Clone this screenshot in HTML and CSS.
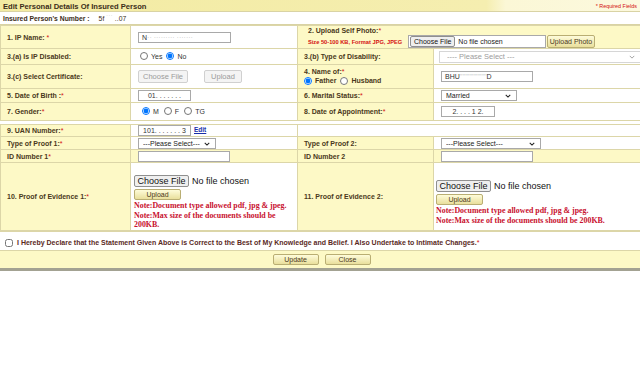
FILE: index.html
```
<!DOCTYPE html>
<html lang="en">
<head>
<meta charset="utf-8">
<title>Edit Personal Details Of Insured Person</title>
<link rel="stylesheet" href="styles.css">
</head>
<body>
<div class="page">
  <div class="titlebar">
    <span class="title">Edit Personal Details Of Insured Person</span>
    <span class="reqnote">* Required Fields</span>
  </div>
  <div class="ipnum">Insured Person's Number :<span class="ipval">5f<span class="mask">&nbsp;˙˙˙&nbsp;</span>..07</span></div>
  <table class="form">
    <colgroup><col class="c1"><col class="c2"><col class="c3"><col class="c4"></colgroup>
    <tr class="r1">
      <td class="lab">1. IP Name: <span class="star">*</span></td>
      <td class="val"><span class="txt w93"><span class="dark">N</span><span class="mask">·· ········· ·······</span></span></td>
      <td class="lab photo" colspan="2">
        <div class="photolab">2. Upload Self Photo:<span class="star">*</span></div>
        <div class="photorow">
          <span class="size">Size 50-100 KB, Format JPG, JPEG</span>
          <span class="filebox"><button class="fbtn" type="button">Choose File</button><span class="fname">No file chosen</span></span>
          <button class="ybtn photobtn" type="button">Upload Photo</button>
        </div>
      </td>
    </tr>
    <tr class="r3a">
      <td class="lab">3.(a) Is IP Disabled:</td>
      <td class="val"><label class="rad"><input type="radio" name="dis">Yes</label><label class="rad"><input type="radio" name="dis" checked>No</label></td>
      <td class="lab">3.(b) Type of Disability:</td>
      <td class="val dis"><span class="selwrap full disabled"><select disabled><option>---- Please Select ---</option></select><svg class="chev" viewBox="0 0 8 5" width="6" height="4"><path d="M1 1l3 3 3-3" fill="none" stroke="#9a9a9a" stroke-width="1.2"/></svg></span></td>
    </tr>
    <tr class="r3c">
      <td class="lab">3.(c) Select Certificate:</td>
      <td class="val"><button class="gbtn cf" type="button" disabled>Choose File</button><button class="gbtn up" type="button" disabled>Upload</button></td>
      <td class="lab">
        <div>4. Name of:<span class="star">*</span></div>
        <div class="namerad"><label class="rad"><input type="radio" name="rel" checked>Father</label><label class="rad"><input type="radio" name="rel">Husband</label></div>
      </td>
      <td class="val"><span class="txt w92">BHU<span class="mask">''''''''''''''''''''</span>D</span></td>
    </tr>
    <tr class="r5">
      <td class="lab">5. Date of Birth :<span class="star">*</span></td>
      <td class="val"><span class="txt w53 ctr">01. . . . . . .</span></td>
      <td class="lab">6. Marital Status:<span class="star">*</span></td>
      <td class="val"><span class="selwrap w76"><select><option>Married</option></select><svg class="chev" viewBox="0 0 8 5" width="6" height="4"><path d="M1 1l3 3 3-3" fill="none" stroke="#222" stroke-width="1.4"/></svg></span></td>
    </tr>
    <tr class="r7">
      <td class="lab">7. Gender:<span class="star">*</span></td>
      <td class="val gender"><label class="rad"><input type="radio" name="g" checked>M</label><label class="rad"><input type="radio" name="g">F</label><label class="rad"><input type="radio" name="g">TG</label></td>
      <td class="lab">8. Date of Appointment:<span class="star">*</span></td>
      <td class="val"><span class="txt w54 ctr">2. . . . 1 2.</span></td>
    </tr>
    <tr class="gap"><td colspan="4"></td></tr>
    <tr class="r9">
      <td class="lab">9. UAN Number:<span class="star">*</span></td>
      <td class="val"><span class="txt w53 ctr">101. . . . . . . 3</span><a class="edit" href="#">Edit</a></td>
      <td class="blank" colspan="2"></td>
    </tr>
    <tr class="rp">
      <td class="lab">Type of Proof 1:<span class="star">*</span></td>
      <td class="val"><span class="selwrap w78"><select><option>---Please Select---</option></select><svg class="chev" viewBox="0 0 8 5" width="6" height="4"><path d="M1 1l3 3 3-3" fill="none" stroke="#222" stroke-width="1.4"/></svg></span></td>
      <td class="lab">Type of Proof 2:</td>
      <td class="val"><span class="selwrap w100"><select><option>---Please Select---</option></select><svg class="chev" viewBox="0 0 8 5" width="6" height="4"><path d="M1 1l3 3 3-3" fill="none" stroke="#222" stroke-width="1.4"/></svg></span></td>
    </tr>
    <tr class="rid">
      <td class="lab">ID Number 1<span class="star">*</span></td>
      <td class="lab val"><span class="txt w92"></span></td>
      <td class="lab">ID Number 2</td>
      <td class="lab val"><span class="txt w92"></span></td>
    </tr>
    <tr class="r10">
      <td class="lab">10. Proof of Evidence 1:<span class="star">*</span></td>
      <td class="val ev">
        <div class="filerow"><button class="fbtn big" type="button">Choose File</button><span class="fname big">No file chosen</span></div>
        <button class="ybtn upl" type="button">Upload</button>
        <div class="note">Note:Document type allowed pdf, jpg &amp; jpeg.<br>Note:Max size of the documents should be 200KB.</div>
      </td>
      <td class="lab">11. Proof of Evidence 2:</td>
      <td class="val ev">
        <div class="filerow"><button class="fbtn big" type="button">Choose File</button><span class="fname big">No file chosen</span></div>
        <button class="ybtn upl" type="button">Upload</button>
        <div class="note">Note:Document type allowed pdf, jpg &amp; jpeg.<br>Note:Max size of the documents should be 200KB.</div>
      </td>
    </tr>
  </table>
  <div class="declare"><label><input type="checkbox">I Hereby Declare that the Statement Given Above is Correct to the Best of My Knowledge and Belief. I Also Undertake to Intimate Changes.<span class="star">*</span></label></div>
  <div class="actions"><button class="ybtn act" type="button">Update</button><button class="ybtn act" type="button">Close</button></div>
</div>
</body>
</html>
```
FILE: styles.css
```
* { box-sizing: border-box; }
body { margin: 0; background: #fff; font-family: "Liberation Sans", Arial, sans-serif; color: #4a3820; }
.page { width: 640px; border-bottom: 3px solid #a3a292; }
.titlebar { height: 12px; display: flex; justify-content: space-between; align-items: center; padding: 1px 3px 0 3px; background: linear-gradient(to right, #f3eba2 0%, #f5eeb0 76%, #fbf7d6 79%, #fcf9de 100%); border-bottom: 1px solid #d9d3a4; }
.title { font-weight: bold; font-size: 7.6px; color: #3c2e1a; }
.reqnote { font-size: 5.4px; color: #d41010; }
.ipnum { height: 13px; display: flex; align-items: center; padding: 0 3px; font-size: 6.8px; font-weight: bold; color: #3c2e1a; border-bottom: 1px solid #d9d3a4; }
.ipval { margin-left: 9px; font-weight: normal; }
.mask { color: #c8c8c8; }
.dark { color: #333; }
.star { color: #d41010; font-weight: normal; }

.form { width: 640px; border-collapse: collapse; table-layout: fixed; }
.c1 { width: 130px; } .c2 { width: 167px; } .c3 { width: 136px; } .c4 { width: 207px; }
.form td { border: 1px solid #dcd6a8; padding: 0 0 0 6px; font-size: 7px; vertical-align: middle; }
.form td.lab { background: #fdf9c6; font-weight: bold; }
.form td.val { background: #fff; padding-left: 7px; font-weight: normal; }
.form td.lab.val { background: #fdf9c6; }
.r1 { height: 23px; } .r3a { height: 16px; } .r3c { height: 24px; } .r5 { height: 14px; }
.r7 { height: 18px; } .gap { height: 4px; } .r9 { height: 12px; } .rp { height: 13px; } .rid { height: 13px; }
.r10 { height: 68px; }
.form tr.gap td { background: #fff; border-left: 0; border-right: 0; }
.form td.blank { background: #fff; border: 0; }

.photo { padding-left: 10px !important; }
.photolab { line-height: 8px; margin-top: 1px; }
.photorow { display: flex; align-items: center; height: 13px; }
.size { color: #d41010; font-size: 5.7px; font-weight: bold; width: 100px; }
.filebox { display: flex; align-items: center; width: 138px; height: 13px; border: 1px solid #a9a9a9; background: #fff; padding-left: 1px; }
.fbtn { font-family: inherit; font-size: 7px; color: #111; background: #efefef; border: 1px solid #8f8f8f; border-radius: 2px; height: 11px; padding: 0 3px; line-height: 9px; }
.fname { font-size: 7px; color: #222; margin-left: 3px; font-weight: normal; }
.ybtn { font-family: inherit; font-size: 7px; color: #4a3820; background: linear-gradient(#fefcda, #e9df9c); border: 1px solid #b9ae73; border-radius: 2px; padding: 0; line-height: 9px; }
.photobtn { width: 48px; height: 13px; margin-left: 1px; }

.rad { display: inline-flex; align-items: center; font-weight: normal; color: #333; margin-right: 4px; }
.rad input { width: 8px; height: 8px; margin: 0 3px 0 0; }
.r3a .rad:first-child { margin-left: 2px; }
.namerad { margin-top: 2px; }
.namerad .rad { font-weight: bold; color: #4a3820; }
.gender .rad { margin-right: 5px; }
.gender .rad:first-child { margin-left: 4px; }

.txt { display: inline-flex; align-items: center; height: 11px; border: 1px solid #a9a9a9; background: #fff; font-size: 7px; color: #333; padding: 0 3px; overflow: hidden; white-space: nowrap; vertical-align: middle; }
.ctr { justify-content: center; }
.w92 { width: 92px; } .w93 { width: 93px; } .w53 { width: 53px; } .w54 { width: 54px; }
.w76 { width: 76px; } .w78 { width: 78px; } .w100 { width: 100px; }
.edit { font-size: 6.5px; font-weight: bold; color: #1a2ea8; margin-left: 3px; }

.selwrap { position: relative; display: inline-flex; align-items: center; height: 11px; border: 1px solid #a9a9a9; background: #fff; vertical-align: middle; }
.selwrap.full { width: 202px; height: 12px; margin-left: -2px; }
.selwrap select { appearance: none; -webkit-appearance: none; border: 0; background: transparent; font-family: inherit; font-size: 7px; color: #222; padding: 0 0 0 4px; margin: 0; height: 9px; line-height: 9px; width: 100%; outline: none; }
.selwrap.disabled { border-color: #d6d6d6; }
.selwrap.disabled select { color: #9d9d9d; font-size: 7.5px; padding-left: 7px; opacity: 1; }
.chev { position: absolute; right: 5px; top: 3px; }

.gbtn { font-family: inherit; font-size: 7.5px; color: #9b9b9b; background: #f4f4f4; border: 1px solid #d0d0d0; border-radius: 2px; height: 13px; padding: 0; }
.cf { width: 50px; }
.up { width: 38px; margin-left: 16px; }

.form td.ev { padding: 12px 0 0 3px; }
.form tr.r10 td:last-child { padding-left: 2px; }
.filerow { display: flex; align-items: center; }
.fbtn.big { font-size: 9px; height: 12px; line-height: 10px; width: 55px; padding: 0; }
.fname.big { font-size: 9px; color: #111; margin-left: 3px; }
.upl { width: 47px; height: 11px; margin-top: 2px; display: block; }
.note { font-family: "Liberation Serif", "Times New Roman", serif; font-weight: bold; color: #c8102e; font-size: 7.9px; line-height: 9.6px; margin-top: 1px; padding-right: 6px; }

.declare { height: 20px; display: flex; align-items: center; padding: 3px 0 0 4px; border-top: 1px solid #dcd6a8; border-bottom: 1px solid #dcd6a8; background: #fff; }
.declare label { display: flex; align-items: center; font-size: 7px; font-weight: bold; color: #5a2a1e; }
.declare input { width: 8px; height: 8px; margin: 0 4px 0 1px; }
.actions { height: 17px; display: flex; justify-content: center; align-items: center; gap: 6px; background: #fdf9c6; padding-left: 3px; }
.act { width: 46px; height: 11px; }
```
